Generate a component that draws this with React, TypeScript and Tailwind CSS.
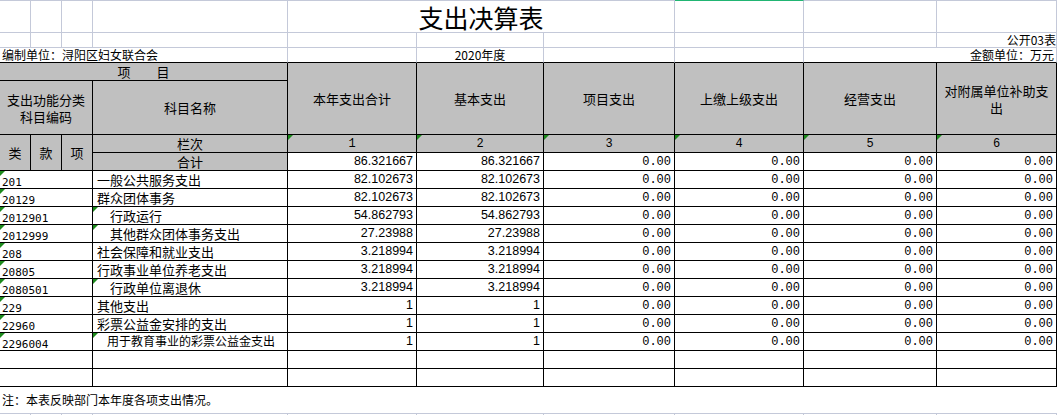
import React from "react";

type Row = {
  code: string;
  name: string;
  indent?: "sub" | "deep";
  total: string;
  basic: string;
};

const rows: Row[] = [
  { code: "201", name: "一般公共服务支出", total: "82.102673", basic: "82.102673" },
  { code: "20129", name: "群众团体事务", total: "82.102673", basic: "82.102673" },
  { code: "2012901", name: "行政运行", indent: "sub", total: "54.862793", basic: "54.862793" },
  { code: "2012999", name: "其他群众团体事务支出", indent: "sub", total: "27.23988", basic: "27.23988" },
  { code: "208", name: "社会保障和就业支出", total: "3.218994", basic: "3.218994" },
  { code: "20805", name: "行政事业单位养老支出", total: "3.218994", basic: "3.218994" },
  { code: "2080501", name: "行政单位离退休", indent: "sub", total: "3.218994", basic: "3.218994" },
  { code: "229", name: "其他支出", total: "1", basic: "1" },
  { code: "22960", name: "彩票公益金安排的支出", total: "1", basic: "1" },
  { code: "2296004", name: "用于教育事业的彩票公益金支出", indent: "deep", total: "1", basic: "1" },
];

const widths = [31, 31, 31, 195, 129, 127, 131, 129, 133, 120];

// excel-ish cell styles
const grid = "border-r border-b border-[#c4c9d9] p-0";
const black = "border-r border-b border-black p-0";
const head = "border-r border-b border-black bg-[#c0c0c0] p-0 text-center align-middle";
const amount = "border-r border-b border-black p-0 px-[3px] text-right font-['Liberation_Sans',sans-serif] text-[12.5px]";

// little green "number stored as text" flag
function Flag() {
  return (
    <span className="absolute left-0 top-0 h-0 w-0 border-t-[5px] border-r-[5px] border-t-[#1c8a1c] border-r-transparent" />
  );
}

function Zero() {
  return (
    <td className={`${black} px-[3px] text-right font-['Liberation_Mono',monospace] text-[12px]`}>
      0.00
    </td>
  );
}

export default function App() {
  return (
    <div className="h-[415px] w-[1060px] overflow-hidden bg-white font-['Noto_Sans_CJK_SC',sans-serif] text-black">
      <table className="table-fixed border-separate border-spacing-0 w-[1057px] text-[13px] leading-none">
        <colgroup>
          {widths.map((w, i) => (
            <col key={i} style={{ width: w }} />
          ))}
        </colgroup>
        <tbody>
          {/* title row */}
          <tr className="h-[33px]">
            <td className={`${grid} border-t`} />
            <td className={`${grid} border-t`} />
            <td className={`${grid} border-t`} />
            <td className={`${grid} border-t`} />
            <td colSpan={3} className={`${grid} border-t text-center align-bottom text-[25px] leading-[30px]`}>
              支出决算表
            </td>
            <td className={`${grid} border-t border-t-[#21b573]`} />
            <td className={`${grid} border-t`} />
            <td className={`${grid} border-t`} />
          </tr>

          <tr className="h-[15px]">
            {widths.slice(0, 9).map((_, i) => (
              <td key={i} className={grid} />
            ))}
            <td className={`${grid} text-right align-bottom text-[12px] leading-[14px]`}>公开03表</td>
          </tr>

          <tr className="h-[15px]">
            <td colSpan={4} className="border-r border-b border-r-[#c4c9d9] border-b-black p-0 pl-[2px] align-bottom text-[12px] leading-[14px] whitespace-nowrap">
              编制单位：浔阳区妇女联合会
            </td>
            <td className="border-r border-b border-r-[#c4c9d9] border-b-black p-0" />
            <td className="border-r border-b border-r-[#c4c9d9] border-b-black p-0 text-center align-bottom text-[12px] leading-[14px]">
              2020年度
            </td>
            <td className="border-r border-b border-r-[#c4c9d9] border-b-black p-0" />
            <td className="border-r border-b border-r-[#c4c9d9] border-b-black p-0" />
            <td colSpan={2} className="border-r border-b border-r-[#c4c9d9] border-b-black p-0 pr-[2px] text-right align-bottom text-[12px] leading-[14px] whitespace-nowrap">
              金额单位：万元
            </td>
          </tr>

          {/* header */}
          <tr className="h-[18px]">
            <td colSpan={4} className={head}>项　　目</td>
            <td rowSpan={2} className={head}>本年支出合计</td>
            <td rowSpan={2} className={head}>基本支出</td>
            <td rowSpan={2} className={head}>项目支出</td>
            <td rowSpan={2} className={head}>上缴上级支出</td>
            <td rowSpan={2} className={head}>经营支出</td>
            <td rowSpan={2} className={head}>
              <div className="leading-[17px]">对附属单位补助支</div>
              <div className="leading-[17px]">出</div>
            </td>
          </tr>
          <tr className="h-[54px]">
            <td colSpan={3} className={head}>
              <div className="leading-[17px]">支出功能分类</div>
              <div className="leading-[17px]">科目编码</div>
            </td>
            <td className={head}>科目名称</td>
          </tr>
          <tr className="h-[18px]">
            <td rowSpan={2} className={head}>类</td>
            <td rowSpan={2} className={head}>款</td>
            <td rowSpan={2} className={head}>项</td>
            <td className={head}>栏次</td>
            {[1, 2, 3, 4, 5, 6].map((n) => (
              <td key={n} className={`${head} relative font-['Liberation_Mono',monospace] text-[12px]`}>
                <Flag />
                {n}
              </td>
            ))}
          </tr>
          <tr className="h-[18px]">
            <td className={head}>合计</td>
            <td className={amount}>86.321667</td>
            <td className={amount}>86.321667</td>
            <Zero />
            <Zero />
            <Zero />
            <Zero />
          </tr>

          {rows.map((r) => (
            <tr key={r.code} className="h-[18px]">
              <td colSpan={3} className={`${black} relative pl-[2px] align-bottom font-['DejaVu_Sans_Mono',monospace] text-[11px]`}>
                <Flag />
                {r.code}
              </td>
              <td
                className={`${black} relative whitespace-nowrap pb-[1px] ${
                  r.indent === "sub"
                    ? "pl-[17px]"
                    : r.indent === "deep"
                      ? "pl-[14px] text-[12px]"
                      : "pl-[4px]"
                }`}
              >
                {r.indent && <Flag />}
                {r.name}
              </td>
              <td className={amount}>{r.total}</td>
              <td className={amount}>{r.basic}</td>
              <Zero />
              <Zero />
              <Zero />
              <Zero />
            </tr>
          ))}

          {[0, 1].map((k) => (
            <tr key={k} className="h-[18px]">
              <td colSpan={3} className={black} />
              {widths.slice(3).map((_, i) => (
                <td key={i} className={black} />
              ))}
            </tr>
          ))}

          <tr className="h-[27px]">
            <td colSpan={10} className="border-b border-[#c4c9d9] p-0 pl-[2px] align-middle text-[12px]">
              注：本表反映部门本年度各项支出情况。
            </td>
          </tr>
          <tr className="h-[20px]">
            {widths.map((_, i) => (
              <td key={i} className={grid} />
            ))}
          </tr>
        </tbody>
      </table>
    </div>
  );
}
